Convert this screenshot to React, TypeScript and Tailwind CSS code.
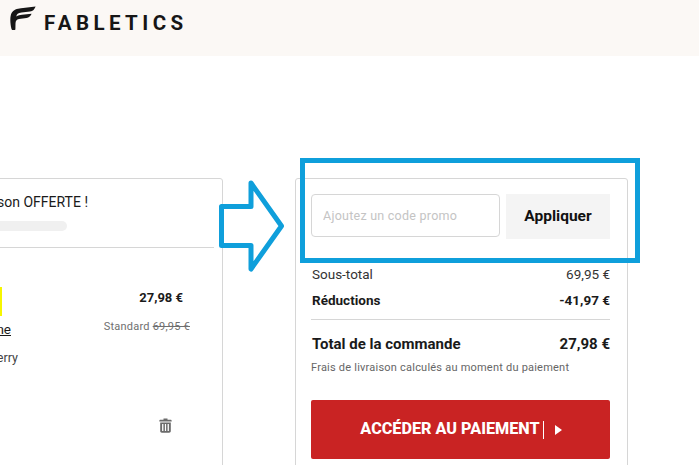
const font = { fontFamily: "Roboto, 'Liberation Sans', sans-serif" };

function LogoMark() {
  return (
    <svg width="27" height="24" viewBox="0 0 27 24" className="shrink-0">
      <path
        d="M1.5 23C-0.2 16 0 10 1.6 7 3.4 3.6 7 2.6 11 2.2L25.6 0.4C24.6 3 23 5.2 20 5.6L11.5 6.6C8 7 6.6 8.4 6.3 10.6 8 9.4 10 9 12 8.8L21.6 7.8C20.8 10.2 19 11.6 16.5 12L9 13C6.5 13.4 5.6 15 5.5 17.5L5.4 23.5C4 24.8 2 24.6 1.5 23Z"
        fill="#161616"
      />
    </svg>
  );
}

function TrashIcon() {
  return (
    <svg width="13" height="15" viewBox="0 0 13 15" className="mr-[11px] mt-[81px]" fill="#6b6b6b">
      <path d="M4.5 0.5H8.5V1.7H11.5C12.2 1.7 12.7 2.2 12.7 3V3.6H0.3V3C0.3 2.2 0.8 1.7 1.5 1.7H4.5Z" />
      <path
        fillRule="evenodd"
        d="M1.2 4.5H11.8V13C11.8 14 11.1 14.7 10.2 14.7H2.8C1.9 14.7 1.2 14 1.2 13ZM3.1 6V13H4.4V6ZM5.9 6V13H7.1V6ZM8.6 6V13H9.9V6Z"
      />
    </svg>
  );
}

function BlueArrow() {
  return (
    <svg width="68" height="94" viewBox="0 0 68 94" className="absolute left-[218px] top-[179px]">
      <path
        d="M3.5 27.5H33V4L63.5 47 33 90V66.5H3.5Z"
        fill="white"
        stroke="#0f9fdb"
        strokeWidth="5"
        strokeLinejoin="round"
      />
    </svg>
  );
}

function SummaryRow({ label, value, className }: { label: string; value: string; className: string }) {
  return (
    <div className={`flex items-center justify-between ${className}`}>
      <span>{label}</span>
      <span>{value}</span>
    </div>
  );
}

export default function App() {
  return (
    <div className="relative h-[465px] w-[699px] overflow-hidden bg-white text-[#1a1a1a]" style={font}>
      <header className="flex h-[56px] items-start gap-[7px] bg-[#fbf8f5] pl-[10px] pt-[6px]">
        <LogoMark />
        <span className="mt-[5px] text-[20.5px] font-bold leading-[24px] tracking-[0.215em] text-[#161616]">
          FABLETICS
        </span>
      </header>

      <main className="ml-[-100px] flex items-start pt-[122px]">
        <section className="h-[320px] w-[323px] shrink-0 rounded-[3px] border border-[#d6d6d6]">
          <div className="ml-[1px] mr-[8px] h-[69px] border-b border-[#d6d6d6] pr-[126px]">
            <p className="flex justify-end whitespace-nowrap pt-[13px] text-[14px] leading-[20px]">Livraison OFFERTE !</p>
            <div className="mt-[9px] h-[10px] w-[165px] rounded-full bg-[#f0f0f0]" />
          </div>
          <div className="flex justify-between pl-[60px] pr-[39px] pt-[39px]">
            <div className="w-[42px]">
              <div className="ml-[-1px] h-[29px] w-[42px] bg-[#f6f600]" />
              <p className="mt-[3px] flex w-[50px] justify-end whitespace-nowrap text-[13.5px] leading-[20px]">
                <span className="underline">Legging Ligne</span>
              </p>
              <p className="mt-[9px] flex w-[57px] justify-end whitespace-nowrap text-[12.5px] leading-[20px] text-[#444]">
                Very Berry
              </p>
            </div>
            <div className="flex flex-col items-end text-right">
              <p className="mt-[1px] text-[13px] font-bold leading-[20px]">27,98 €</p>
              <p className="mr-[-7px] mt-[9px] whitespace-nowrap text-[11px] leading-[20px] tracking-[0.02em] text-[#6f6f6f]">
                Standard <span className="line-through">69,95 €</span>
              </p>
              <TrashIcon />
            </div>
          </div>
        </section>

        <section className="ml-[72px] h-[320px] w-[333px] shrink-0 rounded-[3px] border border-[#d6d6d6] pl-[15px] pr-[17px] pt-[15px]">
          <div className="flex items-start gap-[6px]">
            <input
              readOnly
              placeholder="Ajoutez un code promo"
              className="h-[43px] w-[189px] rounded-[4px] border border-[#d6d6d6] px-[11px] text-[12.5px] tracking-[0.02em] outline-none placeholder:text-[#c4c4c4]"
            />
            <button className="h-[45px] w-[104px] bg-[#f4f4f4] pt-[1px] text-[15.5px] font-bold text-[#111]">
              Appliquer
            </button>
          </div>
          <SummaryRow label="Sous-total" value="69,95 €" className="mt-[25px] pl-[1px] text-[13.5px] leading-[20px] text-[#333]" />
          <SummaryRow label="Réductions" value="-41,97 €" className="mt-[6px] pl-[1px] text-[13.5px] font-bold leading-[20px]" />
          <div className="mt-[9px] border-t border-[#d6d6d6]" />
          <SummaryRow label="Total de la commande" value="27,98 €" className="mt-[14px] pl-[1px] text-[15px] font-bold leading-[20px]" />
          <p className="mt-[4px] text-[11px] leading-[20px] tracking-[0.02em] text-[#666]">
            Frais de livraison calculés au moment du paiement
          </p>
          <button className="mt-[22px] flex h-[59px] w-full items-center justify-center gap-[3px] rounded-[2px] bg-[#c92323] pl-[1px] text-[16.2px] font-extrabold text-white">
            ACCÉDER AU PAIEMENT
            <span className="h-[18px] w-px bg-white" />
            <span className="ml-[8px] h-0 w-0 border-y-[5px] border-l-[7px] border-y-transparent border-l-white" />
          </button>
        </section>
      </main>

      <BlueArrow />
      <div className="absolute left-[300px] top-[158px] h-[105px] w-[340px] border-[5px] border-[#0f9fdb]" />
    </div>
  );
}
